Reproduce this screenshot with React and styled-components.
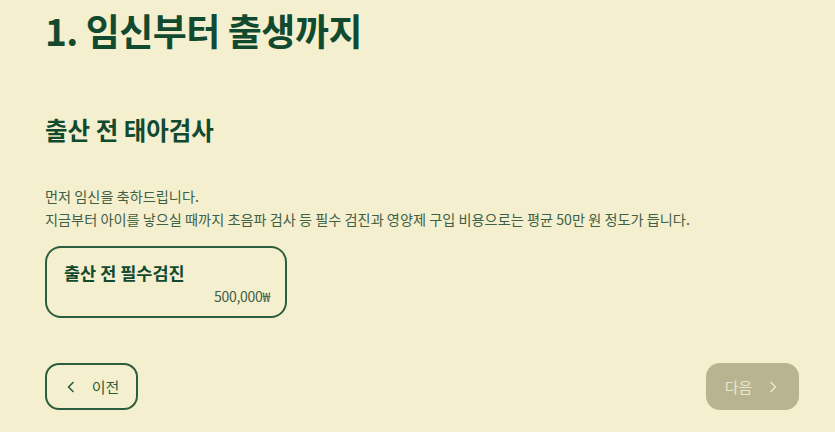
import React from 'react';
import styled, { createGlobalStyle } from 'styled-components';

const GlobalStyle = createGlobalStyle`
  html, body {
    margin: 0;
    padding: 0;
    background: #f4efcf;
  }
  body {
    font-family: 'Noto Sans CJK KR', 'Noto Sans', sans-serif;
    color: #124a2f;
  }
`;

const Page = styled.div`
  width: 835px;
  height: 432px;
  box-sizing: border-box;
  padding: 5px 36px 0 45px;
  display: flex;
  flex-direction: column;
  overflow: hidden;
`;

const Title = styled.h1`
  margin: 0;
  font-size: 37px;
  font-weight: 700;
  letter-spacing: -0.5px;
  line-height: 50px;
  color: #124a2f;
`;

const SectionTitle = styled.h2`
  margin: 58px 0 0;
  font-size: 24.5px;
  font-weight: 700;
  line-height: 34px;
  color: #124a2f;
`;

const Desc = styled.p`
  margin: 38px 0 0;
  font-size: 14.2px;
  line-height: 23px;
  color: #3f6045;
  font-weight: 400;
`;

const Card = styled.div`
  margin-top: 15px;
  width: 242px;
  height: 72px;
  box-sizing: border-box;
  border: 2px solid #2c5e3d;
  border-radius: 16px;
  padding: 12px 15px 0 17px;
  display: flex;
  flex-direction: column;
`;

const CardTitle = styled.div`
  font-size: 17.5px;
  font-weight: 700;
  line-height: 25px;
  color: #124a2f;
`;

const CardPrice = styled.div`
  align-self: flex-end;
  font-size: 14px;
  line-height: 20px;
  margin-top: 1px;
  color: #3f6045;
  letter-spacing: -0.3px;
`;

const Nav = styled.div`
  margin-top: 45px;
  display: flex;
  justify-content: space-between;
`;

const NavButton = styled.button`
  width: 93px;
  height: 47px;
  box-sizing: border-box;
  border-radius: 14px;
  display: flex;
  align-items: center;
  justify-content: center;
  gap: 14px;
  font-family: inherit;
  font-size: 15px;
  cursor: pointer;
  border: ${(p) => (p.$filled ? 'none' : '2px solid #2c5e3d')};
  background: ${(p) => (p.$filled ? '#b8b390' : 'transparent')};
  color: ${(p) => (p.$filled ? '#ece8cc' : '#2c5e3d')};
  svg {
    width: 14px;
    height: 14px;
  }
`;

const Chevron = ({ dir }) => (
  <svg viewBox="0 0 14 14" fill="none" stroke="currentColor" strokeWidth="1.6" strokeLinecap="round" strokeLinejoin="round">
    {dir === 'left' ? <path d="M9 2.5 4.5 7 9 11.5" /> : <path d="M5 2.5 9.5 7 5 11.5" />}
  </svg>
);

export default function App() {
  return (
    <>
      <GlobalStyle />
      <Page>
        <Title>1. 임신부터 출생까지</Title>
        <SectionTitle>출산 전 태아검사</SectionTitle>
        <Desc>
          먼저 임신을 축하드립니다.
          <br />
          지금부터 아이를 낳으실 때까지 초음파 검사 등 필수 검진과 영양제 구입 비용으로는 평균 50만 원 정도가 듭니다.
        </Desc>
        <Card>
          <CardTitle>출산 전 필수검진</CardTitle>
          <CardPrice>500,000₩</CardPrice>
        </Card>
        <Nav>
          <NavButton>
            <Chevron dir="left" />
            이전
          </NavButton>
          <NavButton $filled>
            다음
            <Chevron dir="right" />
          </NavButton>
        </Nav>
      </Page>
    </>
  );
}
